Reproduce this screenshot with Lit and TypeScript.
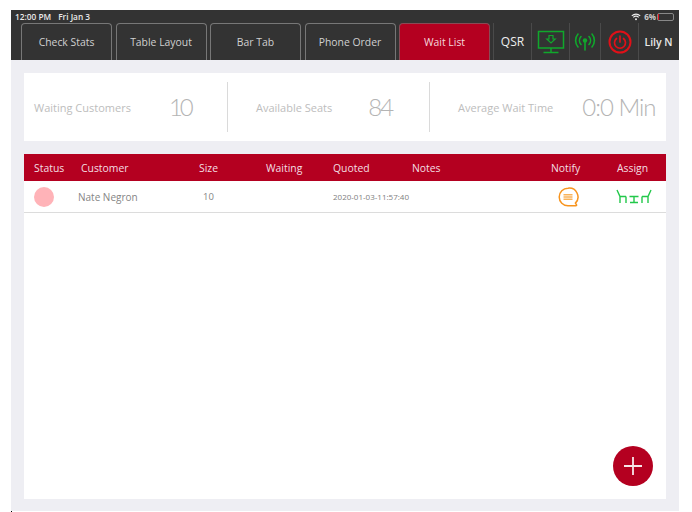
import { LitElement, html, css } from "lit";
import { customElement } from "lit/decorators.js";

@customElement("app-root")
export class AppRoot extends LitElement {
  static styles = css`
    :host { display: block; width: 692px; height: 512px; background: #fff; font-family: "Open Sans", sans-serif; overflow: hidden; }
    .screen { width: 668px; height: 501px; margin: 10px 0 0 11px; background: #eeeef3; display: flex; flex-direction: column; position: relative; }
    .top { height: 50px; background: #333333; display: flex; flex-direction: column; flex: none; }
    .status { height: 13px; display: flex; align-items: center; padding: 0 4px; color: #eaeaea; font-size: 8.3px; font-weight: 600; gap: 7px; line-height: 13px; }
    .spacer { flex: 1; }
    .status svg { display: block; margin-right: -1px; }
    .pct { color: #ccc; font-size: 8px; font-weight: 700; margin-left: -3px; }
    .battery { width: 15px; height: 6px; border: 1px solid #888; border-radius: 2px; margin-left: -6px; margin-right: 1px; position: relative; }
    .battery i { display: block; width: 1px; height: 6px; background: #e01020; }
    .nav { flex: 1; display: flex; padding-left: 10px; }
    .tab { width: 91px; margin-right: 3.5px; box-sizing: border-box; height: 37px; border: 1px solid #777; border-bottom: none; border-radius: 4px 4px 0 0; display: flex; align-items: center; justify-content: center; color: #d0d0d0; font-size: 10.4px; }
    .tab.active { background: #b40020; color: #f4d8dc; margin-right: 3px; border-color: #8a4a55; }
    .cell { height: 37px; box-sizing: border-box; border-left: 1px solid #4a4a4a; display: flex; align-items: center; justify-content: center; color: #eee; flex: none; }
    .qsr { width: 38px; font-size: 12px; }
    .c2 { width: 38px; }
    .c3 { width: 31px; }
    .c4 { width: 38px; }
    .name { width: 40px; font-size: 10.5px; font-weight: 600; color: #e8e8e8; }
    .main { flex: 1; display: flex; flex-direction: column; padding: 13px 13px 12px; gap: 13px; min-height: 0; }
    .stats { height: 68px; background: #fff; display: grid; grid-template-columns: 203px 202px 1fr; align-items: center; flex: none; }
    .stat { height: 50px; display: flex; align-items: center; color: #bdbdbd; font-size: 11px; box-sizing: border-box; }
    .stat + .stat { border-left: 1px solid #dadada; }
    .stat b { font-family: "Lato", sans-serif; font-weight: 300; font-size: 24px; color: #b4b4b4; line-height: 1; }
    .s1 { padding-left: 10px; }
    .s1 b { margin-left: 38px; letter-spacing: -3px; }
    .s2 { padding-left: 28px; }
    .s2 b { margin-left: 36px; letter-spacing: -2px; }
    .s3 { padding-left: 28px; }
    .s3 b { margin-left: 29px; letter-spacing: -1px; }
    .table { flex: 1; background: #fff; display: flex; flex-direction: column; min-height: 0; }
    .head { height: 27px; background: #b40020; color: #f3dfe2; font-size: 10.4px; display: grid; grid-template-columns: 47px 118px 67px 67px 79px 139px 66px 1fr; padding-left: 10px; align-items: center; flex: none; }
    .row { height: 32px; box-sizing: border-box; border-bottom: 1px solid #dcdcdc; display: grid; grid-template-columns: 44px 125px 130px 225px 58px 1fr; padding-left: 10px; align-items: center; color: #858585; font-size: 10px; flex: none; }
    .size { font-size: 9.5px; }
    .dot { width: 20px; height: 20px; border-radius: 50%; background: #ffb3b8; }
    .date { font-size: 8px; color: #808080; }
    .row svg { display: block; }
    .fab { position: absolute; right: 26px; bottom: 25px; width: 40px; height: 40px; border-radius: 50%; background: #b40020; display: flex; align-items: center; justify-content: center; }
    .speck { position: absolute; left: 0; bottom: -1px; width: 1px; height: 1px; background: #000; }
  `;

  render() {
    return html`
      <div class="screen">
        <div class="top">
          <div class="status">
            <span>12:00 PM</span><span>Fri Jan 3</span>
            <span class="spacer"></span>
            <svg width="10" height="8" viewBox="0 0 10 8" fill="none" stroke="#eee" stroke-width="1.1">
              <path d="M.8 2.8a6 6 0 0 1 8.4 0M2.3 4.4a4 4 0 0 1 5.4 0"/><circle cx="5" cy="6.3" r="1" fill="#eee" stroke="none"/>
            </svg>
            <span class="pct">6%</span>
            <span class="battery"><i></i></span>
          </div>
          <div class="nav">
            <div class="tab">Check Stats</div>
            <div class="tab">Table Layout</div>
            <div class="tab">Bar Tab</div>
            <div class="tab">Phone Order</div>
            <div class="tab active">Wait List</div>
            <div class="cell qsr">QSR</div>
            <div class="cell c2">
              <svg width="28" height="24" viewBox="0 0 28 24" fill="none" stroke="#10a82c" stroke-width="1.5">
                <rect x="1.5" y="1.5" width="25" height="16.5"/>
                <path d="M14 18v4M6.5 22.5h15"/>
                <path d="M12 5.5h4v3.5h2.2L14 13l-4.2-4H12z" stroke-width="1.2"/>
              </svg>
            </div>
            <div class="cell c3">
              <svg width="22" height="18" viewBox="0 0 22 18" fill="none" stroke="#10a82c" stroke-width="1.6" stroke-linecap="round">
                <circle cx="11" cy="7.5" r="2.2" fill="#10a82c" stroke="none"/>
                <path d="M11 8v9" stroke-width="1.6"/>
                <path d="M7 3.500a6 6 0 0 0 0 8M15 3.500a6 6 0 0 1 0 8M4 1a10 10 0 0 0 0 13M18 1a10 10 0 0 1 0 13"/>
              </svg>
            </div>
            <div class="cell c4">
              <svg width="24" height="24" viewBox="0 0 24 24" fill="none" stroke="#e01018" stroke-linecap="round">
                <circle cx="12" cy="12" r="10.5" stroke-width="2"/>
                <path d="M8.5 8.500a5.500 5.500 0 1 0 7 0" stroke-width="1.7"/>
                <path d="M12 6v6" stroke-width="1.7"/>
              </svg>
            </div>
            <div class="cell name">Lily N</div>
          </div>
        </div>
        <div class="main">
          <div class="stats">
            <div class="stat s1"><span>Waiting Customers</span><b>10</b></div>
            <div class="stat s2"><span>Available Seats</span><b>84</b></div>
            <div class="stat s3"><span>Average Wait Time</span><b>0:0 Min</b></div>
          </div>
          <div class="table">
            <div class="head">
              <span>Status</span><span>Customer</span><span>Size</span><span>Waiting</span><span>Quoted</span><span>Notes</span><span>Notify</span><span>Assign</span>
            </div>
            <div class="row">
              <div class="dot"></div>
              <span>Nate Negron</span>
              <span class="size">10</span>
              <span class="date">2020-01-03-11:57:40</span>
              <svg width="21" height="20" viewBox="0 0 21 20" fill="none">
                <path d="M10 1.200a8.800 8.800 0 1 0 0 17.600h7.800c.8 0 1-.6.6-1.200l-1-1.500A8.800 8.800 0 0 0 10 1.200z" stroke="#f7941e" stroke-width="1.500" stroke-linejoin="round"/>
                <path d="M5.500 7.800h9M5.500 10h9M5.500 12.200h9" stroke="#f9b35a" stroke-width="1.500"/>
              </svg>
              <svg width="36" height="15" viewBox="0 0 36 15" fill="none" stroke="#22c84a" stroke-width="1.400">
                <path d="M1 1l3 6.500h6M4 7.500V14M10 7.500V14M35 1l-3 6.500h-6M32 7.500V14M26 7.500V14M13.500 7.500h9M18 7.500V13.500M14 13.500h8"/>
              </svg>
            </div>
          </div>
        </div>
        <div class="fab">
          <svg width="18" height="18" viewBox="0 0 18 18" stroke="#f7e6e9" stroke-width="1.800"><path d="M9 0v18M0 9h18"/></svg>
        </div>
        <div class="speck"></div>
      </div>
    `;
  }
}
